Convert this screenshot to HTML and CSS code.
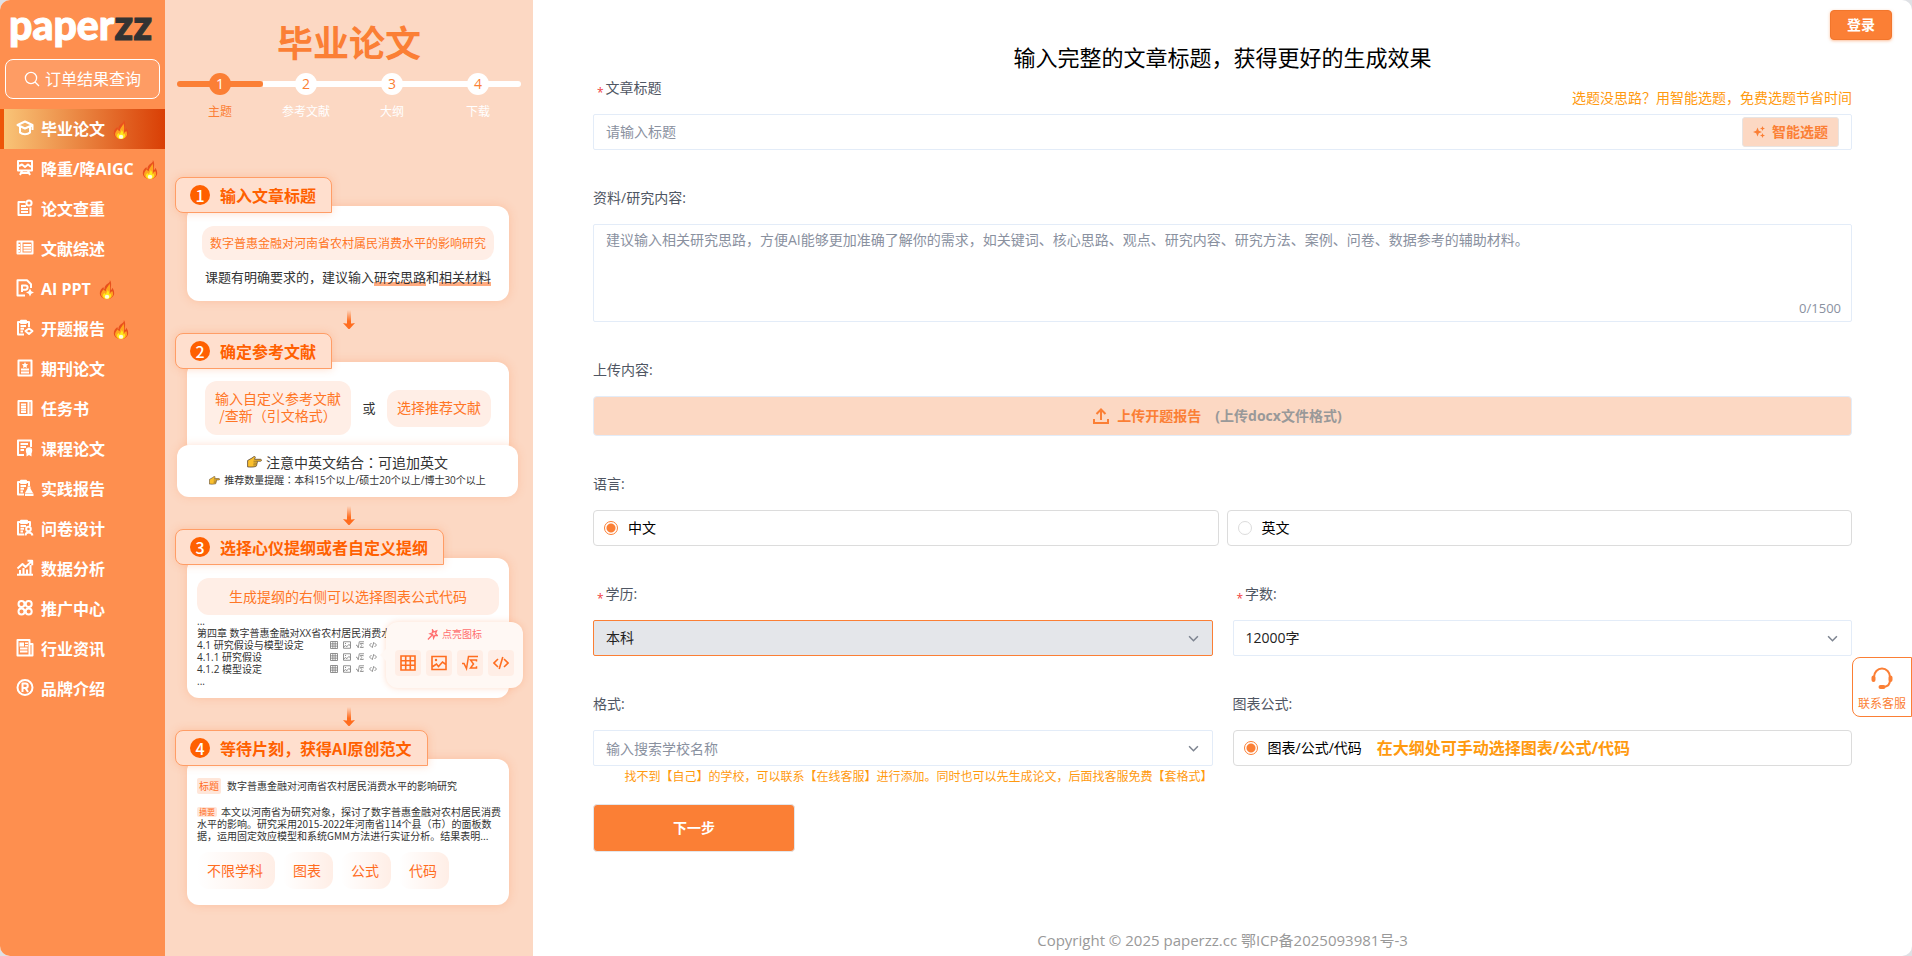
FILE: index.html
```html
<!DOCTYPE html>
<html lang="zh-CN">
<head>
  <meta charset="UTF-8">
  <meta name="viewport" content="width=device-width, initial-scale=1.0">
  <title>毕业论文 - paperzz</title>
  <link rel="stylesheet" href="styles.css">
</head>
<body>
<svg class="sprite" aria-hidden="true">
  <symbol id="fire" viewBox="0 0 14 17">
    <path fill="#e8501d" d="M9.500 0c.4 2.600-1.600 2.700-3.200 4.200C4.800 5.600 4.800 7 4.800 8 4 7.700 3.800 7 3.800 6.200 1.600 7.800.4 10 .6 12.200.9 15.200 3.800 17 7 17s6.200-1.900 6.400-5c.1-1.900-.6-3.600-1.700-5-.1 1-.5 1.700-1.200 2.100C10.300 6 11.600 2.300 9.500 0z"/>
    <path fill="#ffa51f" d="M8.900 3c.2 2.500-3.100 4.100-3 7.100C4.900 9.800 4.500 9.100 4.300 8.200 2.500 9.800 1.600 11.300 1.700 12.900 2 15.500 4.500 17 7 17s5.300-1.600 5.400-4.200c0-1.300-.3-2.300-.9-3.200-.3.900-.9 1.500-1.700 1.700C9.500 8.500 10.500 5.500 8.900 3z"/>
    <path fill="#ffe81a" d="M7.600 9c-.1 1.700-1.400 2.200-1.500 3.700-.7-.1-1.100-.5-1.300-1C4 12.400 3.300 13.200 3.400 14c.2 2 1.900 3 3.600 3s3.500-1.100 3.600-3c0-.7-.1-1.300-.4-1.800-.3.400-.7.600-1.200.6C9 11.500 8.600 10 7.600 9z"/>
    <ellipse fill="#fffbe0" cx="7" cy="15" rx="2" ry="1.800"/>
  </symbol>
  <symbol id="hand" viewBox="0 0 15 12">
    <path fill="#fbc02d" stroke="#5a4632" stroke-width=".8" stroke-linejoin="round" d="M.6 4.500 5 2l2-1.500c.8-.4 1.600.4 1.200 1.200L7.500 3.300h6c1.300 0 1.300 1.900 0 1.900H9.800c1 .4.800 1.700 0 1.900.6.500.4 1.600-.4 1.800.4.600 0 1.600-.8 1.600-2 .6-5 .7-8 .4z"/>
    <path fill="none" stroke="#5a4632" stroke-width=".6" d="M6.500 5.200h3.300M6.500 7.100h3.300M6.300 8.900h3"/>
  </symbol>
  <symbol id="down" viewBox="0 0 12 20">
    <linearGradient id="fade" x1="0" y1="0" x2="0" y2="1"><stop offset="0" stop-color="#ff6d1f" stop-opacity="0"/><stop offset=".8" stop-color="#ff6d1f"/></linearGradient>
    <path fill="url(#fade)" d="M4 0h4v14H4z"/>
    <path fill="#ff6d1f" d="M0 13c2 .6 4 .6 6 .6s4 0 6-.6l-5 5.500q-1 1-2 0z"/>
  </symbol>
  <symbol id="chevron" viewBox="0 0 10 10"><path fill="none" stroke="#7d8490" stroke-width="1.400" d="M1 3l4 4 4-4"/></symbol>
  <symbol id="grid" viewBox="0 0 16 16"><path fill="none" stroke="currentColor" stroke-width="1.600" d="M1 1h14v14H1zM1 5.700h14M1 10.300h14M5.700 1v14M10.300 1v14"/></symbol>
  <symbol id="image" viewBox="0 0 16 16"><path fill="none" stroke="currentColor" stroke-width="1.600" d="M1 1.500h14v13H1zM1 12l4.500-3 2 2.500L11.500 7 15 9.500"/><circle cx="5" cy="5" r="1.200" fill="currentColor"/></symbol>
  <symbol id="formula" viewBox="0 0 16 16"><path fill="none" stroke="currentColor" stroke-width="1.500" d="M0 8.500h2l2.500 5 2-12H16M14.500 6.500V5H8.500l3 4-3 4h6v-1.700"/></symbol>
  <symbol id="code" viewBox="0 0 16 16"><path fill="none" stroke="currentColor" stroke-width="1.600" d="M5 4 1 8l4 4M11 4l4 4-4 4M9.800 2 6.200 14"/></symbol>
</svg>

<div class="page">
  <nav class="sidebar">
    <a class="logo" href="#">paper<span>zz</span></a>
    <button class="order-btn" type="button">
      <svg width="16" height="16" viewBox="0 0 16 16" fill="none" stroke="#fff" stroke-width="1.300"><circle cx="7" cy="7" r="5.600"/><path d="M11 11l4 4"/></svg>
      订单结果查询
    </button>
    <div class="menu">
      <a class="active" href="#">
        <svg viewBox="0 0 18 18"><path class="l" d="M1.500 6 9 2.500 16.500 6 9 9.500zM4 8v5.500c2.500 2.300 7.500 2.300 10 0V8M16.500 6v5"/></svg>
        毕业论文<svg class="fire"><use href="#fire"/></svg></a>
      <a href="#">
        <svg viewBox="0 0 18 18"><path class="l" d="M2 2h14v9.500H2zM6 12l-2 4M12 12l2 4M3 7l3-1.500L9 8l3-2.500L15 8M5 14h8"/></svg>
        降重/降AIGC<svg class="fire"><use href="#fire"/></svg></a>
      <a href="#">
        <svg viewBox="0 0 18 18"><path class="l" d="M9.500 3H2.500v13h12V8.500M5 7h5M5 10h7M5 13h7"/><circle class="l" cx="13" cy="4" r="2.600"/></svg>
        论文查重</a>
      <a href="#">
        <svg viewBox="0 0 18 18"><path class="l" d="M1.500 2.500h15v12h-15zM5.500 3v12M7.500 6H15M7.500 8.700H15M7.500 11.500H15M2 6h2M2 9h2M2 12h2"/></svg>
        文献综述</a>
      <a href="#">
        <svg viewBox="0 0 18 18"><path class="l" d="M9 16.500H1.500V1.200h9.500l4 4V9M6 13V6.500h3.500a2 2 0 0 1 0 4.200H6"/><path fill="#fff" d="m14 9.500 1.300 2.700L18 13.500l-2.700 1.300L14 17.500l-1.300-2.700-2.700-1.300 2.700-1.300z"/></svg>
        AI PPT<svg class="fire"><use href="#fire"/></svg></a>
      <a href="#">
        <svg viewBox="0 0 18 18"><path class="l" d="M8 15.500H2V3h11v5M5 1.800h5V4H5zM4.500 7H10M4.500 9.800H8M4.500 12.500H7"/><path class="l" d="m13 9.500 3.500 2.500-3.500 3-3.500-3z"/></svg>
        开题报告<svg class="fire"><use href="#fire"/></svg></a>
      <a href="#">
        <svg viewBox="0 0 18 18"><path class="l" d="M2.500 1.500h13v15h-13zM5 10.500h8M5 13.500h8"/><path fill="#fff" d="m9 3 1 2 2.200.3-1.600 1.500.4 2.200-2-1-2 1 .4-2.200-1.600-1.500L8 5z"/></svg>
        期刊论文</a>
      <a href="#">
        <svg viewBox="0 0 18 18"><path class="l" d="M2.500 2h13v14h-13zM12.500 2v14M5 5.500h5M5 8h5M5 10.500h5M5 13h5"/></svg>
        任务书</a>
      <a href="#">
        <svg viewBox="0 0 18 18"><path class="l" d="M8 16H2V1.500h13V8M4.500 5H12M4.500 8H10M4.500 11H8"/><circle cx="13" cy="11.500" r="3.200" fill="#fff"/><path fill="#fff" d="M10.500 12.500V17.500L13 16l2.500 1.500v-5z"/></svg>
        课程论文</a>
      <a href="#">
        <svg viewBox="0 0 18 18"><path class="l" d="M8 15.500H2V3h11v4M5 1.800h5V4H5zM4.500 7H10M4.500 9.800H8M4.500 12.500H7"/><path fill="#fff" d="M11.500 7.500h3v2L17 14H9l2.500-4.500zM9 14.500h8.500V17H9z"/></svg>
        实践报告</a>
      <a href="#">
        <svg viewBox="0 0 18 18"><path class="l" d="M8 15.500H2V3h12v4M5 1.800h6V4H5zM4.500 7H10M4.500 9.800H8M4.500 12.500H7"/><circle class="l" cx="12.500" cy="10" r="2.300"/><path class="l" d="M9.500 16.500c0-4 6-4 7 0"/></svg>
        问卷设计</a>
      <a href="#">
        <svg viewBox="0 0 18 18"><path class="l" d="M1 15.800h16M4 15v-4M7.500 15V9M11 15v-4.500M14.500 15V6M1.500 9.500l5-4.500 3 3L16 2M11.500 1.800h4.700v4.500"/></svg>
        数据分析</a>
      <a href="#">
        <svg viewBox="0 0 18 18"><circle class="l" cx="5.500" cy="5" r="3"/><circle class="l" cx="12.700" cy="5" r="3"/><circle class="l" cx="5.500" cy="12.500" r="3"/><circle class="l" cx="12.700" cy="12.500" r="3"/></svg>
        推广中心</a>
      <a href="#">
        <svg viewBox="0 0 18 18"><path class="l" d="M1.500 1h12v15.500h-12zM13.500 5h3v11.500h-4M4 9.500h7.500M4 12.500h7.500"/><path fill="#fff" d="M3.500 3.500H8V7.500H3.500zM9 3.500h3V5H9zM9 6h3v1.500H9z"/></svg>
        行业资讯</a>
      <a href="#">
        <svg viewBox="0 0 18 18"><circle class="l" cx="9" cy="8.500" r="7.500"/><path class="l" d="M6.500 13V4.500h3a2.200 2.200 0 0 1 0 4.500h-3M9.500 9l2.500 4"/></svg>
        品牌介绍</a>
    </div>
  </nav>

  <aside class="guide">
    <h1>毕业论文</h1>
    <ol class="steps">
      <li class="on"><b>1</b>主题</li>
      <li><b>2</b>参考文献</li>
      <li><b>3</b>大纲</li>
      <li><b>4</b>下载</li>
    </ol>

    <h2 class="tag"><i>1</i>输入文章标题</h2>
    <div class="card card-title">
      <p class="pill">数字普惠金融对河南省农村属民消费水平的影响研究</p>
      <p>课题有明确要求的，建议输入<u>研究思路</u>和<u>相关材料</u></p>
    </div>
    <svg class="down"><use href="#down"/></svg>

    <h2 class="tag"><i>2</i>确定参考文献</h2>
    <div class="card card-refs">
      <p class="pill">输入自定义参考文献<br>/查新（引文格式）</p>
      <span>或</span>
      <p class="pill">选择推荐文献</p>
    </div>
    <div class="note">
      <p><svg><use href="#hand"/></svg><span>注意中英文结合<span lang="zh-TW">：</span>可追加英文</span></p>
      <p class="small"><svg><use href="#hand"/></svg><span>推荐数量提醒<span lang="zh-TW">：</span>本科15个以上/硕士20个以上/博士30个以上</span></p>
    </div>
    <svg class="down"><use href="#down"/></svg>

    <h2 class="tag"><i>3</i>选择心仪提纲或者自定义提纲</h2>
    <div class="card card-outline">
      <p class="pill">生成提纲的右侧可以选择图表公式代码</p>
      <ul>
        <li>...</li>
        <li>第四章 数字普惠金融对XX省农村居民消费水</li>
        <li><span>4.1 研究假设与模型设定</span><svg><use href="#grid"/></svg><svg><use href="#image"/></svg><svg><use href="#formula"/></svg><svg><use href="#code"/></svg></li>
        <li><span>4.1.1 研究假设</span><svg><use href="#grid"/></svg><svg><use href="#image"/></svg><svg><use href="#formula"/></svg><svg><use href="#code"/></svg></li>
        <li><span>4.1.2 模型设定</span><svg><use href="#grid"/></svg><svg><use href="#image"/></svg><svg><use href="#formula"/></svg><svg><use href="#code"/></svg></li>
        <li>...</li>
      </ul>
      <div class="popover">
        <p><svg viewBox="0 0 12 12" fill="none" stroke="#ff6f6f" stroke-width="1.400"><path d="M1 11.500l5.500-5.700M6 1l1.500 2.200L10.500 2 9.300 5l2.200 2.200-3-.3L7.200 10l-.7-3.500L3.300 5.200l2.800-1z"/></svg>点亮图标</p>
        <div>
          <span><svg><use href="#grid"/></svg></span>
          <span><svg><use href="#image"/></svg></span>
          <span><svg><use href="#formula"/></svg></span>
          <span><svg><use href="#code"/></svg></span>
        </div>
      </div>
    </div>
    <svg class="down"><use href="#down"/></svg>

    <h2 class="tag"><i>4</i>等待片刻，获得AI原创范文</h2>
    <div class="card card-result">
      <p class="subject"><mark>标题</mark>数字普惠金融对河南省农村居民消费水平的影响研究</p>
      <p class="abstract"><mark>摘要</mark>本文以河南省为研究对象，探讨了数字普惠金融对农村居民消费水平的影响。研究采用2015-2022年河南省114个县（市）的面板数据，运用固定效应模型和系统GMM方法进行实证分析。结果表明...</p>
      <div class="features">
        <span>不限学科</span>
        <span>图表</span>
        <span>公式</span>
        <span>代码</span>
      </div>
    </div>
  </aside>

  <main class="main">
    <header><button class="login" type="button">登录</button></header>
    <form>
      <h2>输入完整的文章标题，获得更好的生成效果</h2>

      <div class="item">
        <div class="label-row">
          <label class="required" for="title">文章标题</label>
          <a href="#">选题没思路？用智能选题，免费选题节省时间</a>
        </div>
        <div class="box title-box">
          <input id="title" type="text" placeholder="请输入标题">
          <button type="button">
            <svg width="12" height="12" viewBox="0 0 12 12" fill="#fb7f35"><path d="M4.500 1.500 5.800 4.700 9 6 5.800 7.300 4.500 10.500 3.200 7.300 0 6l3.200-1.300zM9.500 0l.7 1.800L12 2.500l-1.800.7L9.500 5l-.7-1.800L7 2.500l1.800-.7zM9.500 7l.7 1.800 1.800.7-1.800.7-.7 1.800-.7-1.800L7 9.500l1.800-.7z"/></svg>
            智能选题
          </button>
        </div>
      </div>

      <div class="item">
        <label for="content">资料/研究内容:</label>
        <div class="box area-box">
          <textarea id="content" placeholder="建议输入相关研究思路，方便AI能够更加准确了解你的需求，如关键词、核心思路、观点、研究内容、研究方法、案例、问卷、数据参考的辅助材料。"></textarea>
          <span>0/1500</span>
        </div>
      </div>

      <div class="item">
        <label for="upload">上传内容:</label>
        <button class="upload" id="upload" type="button">
          <svg width="16" height="16" viewBox="0 0 16 16" fill="none" stroke="#fb7f35" stroke-width="2"><path d="M8 12V2M3.500 6 8 1.500 12.500 6M1 11v4h14v-4"/></svg>
          上传开题报告<span>(上传docx文件格式)</span>
        </button>
      </div>

      <div class="item">
        <label for="zh">语言:</label>
        <div class="row langs">
          <label class="radio"><input type="radio" name="lang" id="zh" checked>中文</label>
          <label class="radio"><input type="radio" name="lang">英文</label>
        </div>
      </div>

      <div class="row">
        <div class="item">
          <label class="required" for="degree">学历:</label>
          <div class="select focus">
            <select id="degree"><option>本科</option><option>专科</option><option>硕士</option></select>
            <svg><use href="#chevron"/></svg>
          </div>
        </div>
        <div class="item">
          <label class="required" for="words">字数:</label>
          <div class="select">
            <select id="words"><option>12000字</option><option>8000字</option></select>
            <svg><use href="#chevron"/></svg>
          </div>
        </div>
      </div>

      <div class="row">
        <div class="item school">
          <label for="school">格式:</label>
          <div class="select">
            <input id="school" type="text" placeholder="输入搜索学校名称">
            <svg><use href="#chevron"/></svg>
          </div>
          <p class="hint">找不到【自己】的学校，可以联系【在线客服】进行添加。同时也可以先生成论文，后面找客服免费【套格式】</p>
        </div>
        <div class="item">
          <label for="charts">图表公式:</label>
          <label class="radio"><input type="radio" id="charts" checked>图表/公式/代码<strong>在大纲处可手动选择图表/公式/代码</strong></label>
        </div>
      </div>

      <button class="next" type="button">下一步</button>
    </form>
    <footer>Copyright © 2025 paperzz.cc 鄂ICP备2025093981号-3</footer>
  </main>
</div>

<a class="service" href="#">
  <svg width="24" height="24" viewBox="0 0 24 24" fill="none" stroke="#fb7f35" stroke-width="2"><path d="M4 13.500V11a8 8.500 0 0 1 16 0v3c0 4-2.500 6.500-6 7"/><path stroke-width="4" stroke-linecap="round" d="M3.500 11.500v2.500M20.500 11.500v2.500M10.500 21h3"/></svg>
  联系客服
</a>
</body>
</html>
```
FILE: styles.css
```css
* {
    box-sizing: border-box;
}
body {
    margin: 0;
    background: #dfe1e5;
    font-family: "Open Sans", "Noto Sans CJK SC", sans-serif;
    font-size: 14px;
    line-height: 20px;
    color: #000;
}
h1, h2, p, ul, ol {
    margin: 0;
    padding: 0;
}
ul, ol {
    list-style: none;
}
a {
    text-decoration: none;
}
button, input, textarea, select {
    font: inherit;
}
button {
    cursor: pointer;
}
.sprite {
    position: absolute;
    width: 0;
    height: 0;
}
.page {
    display: flex;
    min-height: 100vh;
    border-radius: 10px;
    overflow: hidden;
    background: #fff;
}

/* sidebar */
.sidebar {
    width: 165px;
    flex: none;
    background: #fe8f4f;
}
.logo {
    display: block;
    height: 59px;
    padding-left: 9px;
    font-family: Lato, sans-serif;
    font-size: 41px;
    font-weight: 900;
    line-height: 50px;
    color: #fff;
    -webkit-text-stroke: 1px #fff;
}
.logo span {
    color: #333;
    -webkit-text-stroke: 1px #333;
}
.order-btn {
    display: flex;
    align-items: center;
    justify-content: center;
    gap: 5px;
    width: 155px;
    height: 40px;
    margin: 0 5px 10px;
    padding: 0;
    border: 1px solid #fff;
    border-radius: 8px;
    background: rgba(255, 255, 255, 0.12);
    color: #fff;
    font-size: 16px;
}
.menu a {
    display: flex;
    align-items: center;
    height: 40px;
    padding-left: 16px;
    color: #fff;
    font-size: 16px;
    font-weight: bold;
    white-space: nowrap;
}
.menu svg {
    width: 18px;
    height: 18px;
    margin: 0 7px 2px 0;
    flex: none;
}
.menu .l {
    fill: none;
    stroke: #fff;
    stroke-width: 2;
    stroke-linejoin: round;
}
.menu .fire {
    width: 16px;
    height: 19px;
    margin: 0 0 0 8px;
}
.menu .active {
    padding-left: 12px;
    border-left: 4px solid #ee5609;
    background: linear-gradient(90deg, #f9c477, #d93f05);
}

/* guide */
.guide {
    width: 368px;
    flex: none;
    background: #fcd8c3;
    font-family: "Noto Sans CJK SC", sans-serif;
    color: #333;
}
.guide h1 {
    padding-top: 18px;
    text-align: center;
    font-size: 36px;
    line-height: 46px;
    color: #fb7f35;
}
.steps {
    display: flex;
    margin: 9px 12px 57px;
}
.steps li {
    position: relative;
    flex: 1;
    text-align: center;
    font-size: 12px;
    line-height: 18px;
    color: #fff;
}
/* progress bar behind the numbers */
.steps li::before {
    content: "";
    position: absolute;
    top: 8px;
    left: 0;
    width: 100%;
    height: 6px;
    background: #fff;
}
.steps li:last-child::before {
    border-radius: 0 3px 3px 0;
}
.steps b {
    position: relative;
    display: block;
    width: 22px;
    margin: 0 auto 7px;
    border-radius: 50%;
    background: #fff;
    color: #fb7f35;
    font-family: "Open Sans", sans-serif;
    font-size: 14px;
    font-weight: normal;
    line-height: 22px;
}
.steps .on {
    color: #fb7f35;
}
.steps .on::before {
    border-radius: 3px;
    background: #fb7f35;
}
.steps .on b {
    background: #fb7f35;
    color: #fff;
}
.tag {
    position: relative;
    z-index: 1;
    display: flex;
    align-items: center;
    width: fit-content;
    height: 36px;
    margin-left: 10px;
    padding: 0 15px 1px 14px;
    border: 1px solid #ff9d66;
    border-radius: 8px 8px 0 8px;
    background: #ffdfce;
    box-shadow: 0 0 8px rgba(255, 140, 80, 0.3);
    color: #ff6000;
    font-size: 16px;
}
.tag i {
    width: 20px;
    margin-right: 10px;
    border-radius: 50%;
    background: #ff6000;
    color: #fff;
    font-size: 16px;
    font-style: normal;
    font-weight: 500;
    line-height: 20px;
    text-align: center;
}
.card {
    position: relative;
    margin: -7px 24px 0 22px;
    border-radius: 12px;
    background: #fff;
    box-shadow: 0 0 10px rgba(255, 140, 80, 0.3);
}
.pill {
    border-radius: 12px;
    background: #ffeee6;
    color: #ff7626;
    font-size: 14px;
    text-align: center;
}
.down {
    display: block;
    width: 12px;
    height: 20px;
    margin: 9px auto 3px;
}
.card-title {
    padding: 20px 15px 15px;
    font-size: 13px;
    line-height: 18px;
    text-align: center;
    white-space: nowrap;
}
.card-title .pill {
    margin-bottom: 8px;
    font-size: 12px;
    line-height: 34px;
}
.card-title u {
    text-decoration: none;
    background: linear-gradient(#ffab80, #ffab80) 0 bottom / 100% 4px no-repeat;
}
.card-refs {
    display: flex;
    align-items: center;
    justify-content: space-between;
    padding: 19px 18px 20px;
    font-size: 13px;
}
.card-refs .pill {
    padding: 9px 10px 11px;
    line-height: 17px;
}
.note {
    position: relative;
    margin: -10px 15px 0 12px;
    padding: 7px 0 9px;
    border-radius: 12px;
    background: #fff;
    box-shadow: 0 0 8px rgba(255, 140, 80, 0.25);
    white-space: nowrap;
}
.note p {
    display: flex;
    align-items: center;
    justify-content: center;
    gap: 4px;
}
.note [lang] {
    font-family: "Noto Sans CJK TC", sans-serif;
}
.note svg {
    width: 15px;
    height: 12px;
}
.note .small {
    font-family: "Open Sans", "Noto Sans CJK SC", sans-serif;
    font-size: 10px;
    line-height: 16px;
}
.note .small svg {
    width: 11px;
    height: 9px;
}
.card-outline {
    padding: 20px 10px 11px;
}
.card-outline .pill {
    line-height: 36px;
    padding-bottom: 1px;
}
.card-outline li {
    display: flex;
    align-items: center;
    gap: 5px;
    font-family: "Open Sans", "Noto Sans CJK SC", sans-serif;
    font-size: 10px;
    line-height: 12px;
    white-space: nowrap;
}
.card-outline li span {
    width: 128px;
}
.card-outline li svg {
    width: 8px;
    height: 8px;
    color: #777;
}
.popover {
    position: absolute;
    top: 64px;
    right: -14px;
    width: 137px;
    height: 66px;
    padding: 4px 9px;
    border-radius: 12px;
    background: #fff8f4;
    box-shadow: 0 0 6px rgba(255, 140, 80, 0.3);
    font-size: 10px;
    line-height: 16px;
    color: #ff6f6f;
}
.popover::before {
    content: "";
    position: absolute;
    left: -6px;
    top: 27px;
    border: 6px solid transparent;
    border-left-width: 0;
    border-right-color: #fff8f4;
}
.popover p {
    display: flex;
    align-items: center;
    justify-content: center;
    gap: 4px;
}
.popover p svg {
    width: 11px;
    height: 11px;
}
.popover div {
    display: flex;
    justify-content: space-between;
    margin-top: 8px;
}
.popover span {
    display: flex;
    align-items: center;
    justify-content: center;
    width: 26px;
    height: 26px;
    border-radius: 4px;
    background: #ffeee6;
    color: #ff6d1f;
}
.popover span svg {
    width: 16px;
    height: 16px;
}
.card-result {
    padding: 19px 6px 16px 10px;
    font-size: 10px;
    line-height: 12px;
}
.card-result mark {
    display: inline-block;
    padding: 0 2px;
    border-radius: 2px;
    background: #ffe6d9;
    color: #ff6d1f;
}
.subject mark {
    margin-right: 6px;
    line-height: 16px;
}
.abstract {
    margin: 12px 0 10px;
}
.abstract mark {
    margin-right: 4px;
    font-size: 8px;
    line-height: 10px;
    vertical-align: 1px;
}
.features {
    display: flex;
    gap: 8px;
}
.features span {
    padding: 0 12px 0 10px;
    border-radius: 12px;
    background: linear-gradient(90deg, #fff, #ffeee6);
    color: #ff6d1f;
    font-size: 14px;
    line-height: 37px;
}

/* form */
.main {
    display: flex;
    flex: 1;
    flex-direction: column;
}
.main header {
    display: flex;
    justify-content: flex-end;
    height: 44px;
    padding: 10px 20px 0;
}
.login {
    width: 62px;
    height: 30px;
    padding: 0;
    border: 1px solid #f2762c;
    border-radius: 4px;
    background: #fb7f35;
    box-shadow: 0 1px 3px rgba(251, 127, 53, 0.5);
    color: #fff;
    font-weight: bold;
}
form {
    padding: 0 60px;
}
form h2 {
    padding-bottom: 2px;
    text-align: center;
    font-size: 22px;
    font-weight: normal;
    line-height: 26px;
}
.item {
    margin-bottom: 32px;
}
.item label {
    display: block;
    height: 42px;
    line-height: 32px;
    color: #4f5663;
}
.item .required::before {
    content: "*";
    margin: 0 2px 0 4px;
    color: #f03e3e;
    font-size: 12px;
    line-height: 12px;
    vertical-align: -4px;
}
.label-row {
    display: flex;
    justify-content: space-between;
}
.label-row a {
    padding-top: 16px;
    color: #ff9a0f;
}
.box, .select {
    border: 1px solid #e3ecf8;
    border-radius: 2px;
    background: #fff;
}
.box input, .box textarea, .select input, .select select {
    width: 100%;
    padding: 0 12px;
    border: 0;
    outline: 0;
    background: none;
    color: #222;
}
::placeholder {
    color: #8a919f;
    opacity: 1;
}
.title-box {
    display: flex;
    align-items: center;
    height: 36px;
    padding-right: 12px;
}
.title-box button {
    display: flex;
    align-items: center;
    justify-content: center;
    gap: 7px;
    flex: none;
    width: 97px;
    height: 30px;
    padding: 0;
    border: 1px solid #e8e4e2;
    border-radius: 3px;
    background: #fcd8c3;
    color: #fb7f35;
    font-weight: bold;
}
.area-box {
    display: flex;
    flex-direction: column;
    height: 98px;
    padding: 5px 0 3px;
}
.area-box textarea {
    flex: 1;
    resize: none;
}
.area-box span {
    padding-right: 10px;
    text-align: right;
    font-size: 13px;
    color: #8a919f;
}
.upload {
    display: flex;
    align-items: center;
    justify-content: center;
    gap: 8px;
    width: 100%;
    height: 40px;
    padding: 0 10px 0 0;
    border: 1px solid #e3ecf8;
    border-radius: 4px;
    background: #fcd8c3;
    color: #fb7f35;
    font-weight: bold;
}
.upload span {
    margin-left: 6px;
    color: #999;
}
.row {
    display: grid;
    grid-template-columns: 1fr 1fr;
    gap: 20px;
}
.langs {
    gap: 8px;
}
.item .radio {
    display: flex;
    align-items: center;
    height: 36px;
    padding: 0 10px;
    border: 1px solid #dcdcdc;
    border-radius: 4px;
    color: #000;
}
.radio input {
    width: 14px;
    height: 14px;
    margin: 0 10px 0 0;
    appearance: none;
    border: 1px solid #dcdcdc;
    border-radius: 50%;
}
.radio input:checked {
    border-color: #fb7f35;
    background: radial-gradient(#fb7f35 4px, #fff 5px);
}
.radio strong {
    margin-left: 15px;
    font-size: 16px;
    color: #ff9a0f;
}
.select {
    position: relative;
    height: 36px;
}
.select select, .select input {
    height: 34px;
    appearance: none;
}
.select svg {
    position: absolute;
    top: 12px;
    right: 13px;
    width: 11px;
    height: 11px;
    pointer-events: none;
}
.focus {
    border-color: #fb7f35;
    background: #e4e6ea;
}
.school {
    margin-bottom: 18px;
}
.hint {
    padding-top: 2px;
    text-align: right;
    font-size: 12px;
    line-height: 18px;
    color: #ff9a0f;
}
.next {
    display: block;
    width: 202px;
    height: 48px;
    border: 1px solid #e3e6ea;
    border-radius: 4px;
    background: #fb7f35;
    color: #fff;
    font-weight: bold;
}
footer {
    margin-top: auto;
    padding: 20px 0 6px;
    text-align: center;
    font-size: 15px;
    color: #999;
}
.service {
    position: fixed;
    right: 0;
    top: 657px;
    display: flex;
    flex-direction: column;
    align-items: center;
    gap: 4px;
    width: 60px;
    height: 60px;
    padding-top: 8px;
    border: 1px solid #fb7f35;
    border-radius: 8px 0 0 8px;
    background: #fff;
    color: #fb7f35;
    font-size: 12px;
}
```
